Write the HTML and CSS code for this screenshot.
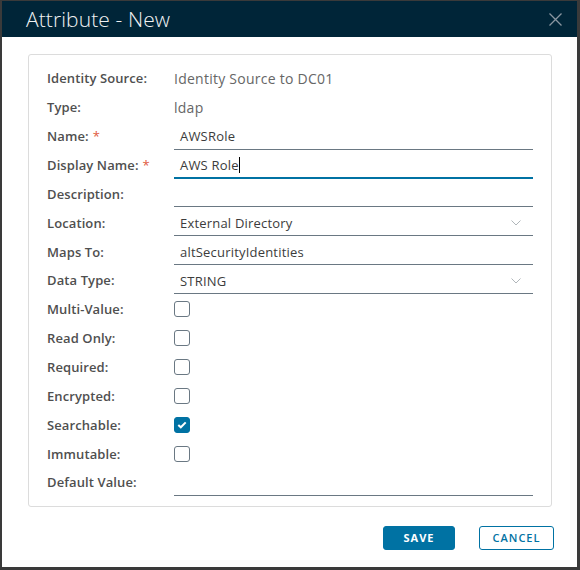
FILE: index.html
```html
<!DOCTYPE html>
<html>
<head>
<meta charset="utf-8">
<link rel="stylesheet" href="styles.css">
</head>
<body>
<div class="modal">
  <div class="modal-header">
    <h3 class="modal-title">Attribute - New</h3>
    <button class="close" aria-label="Close">
      <svg width="13" height="13" viewBox="0 0 13 13"><path d="M0.5 0.5 L12.5 12.5 M12.5 0.5 L0.5 12.5" stroke="#8a96a0" stroke-width="1.3" fill="none"/></svg>
    </button>
  </div>
  <div class="modal-body">
    <div class="card">
      <div class="form">
        <div class="label">Identity Source:</div>
        <div class="static big">Identity Source to DC01</div>

        <div class="label">Type:</div>
        <div class="static big">ldap</div>

        <div class="label">Name: <span class="req">*</span></div>
        <div class="field"><div class="input">AWSRole</div></div>

        <div class="label">Display Name: <span class="req">*</span></div>
        <div class="field"><div class="input focus">AWS Role<span class="caret"></span></div></div>

        <div class="label">Description:</div>
        <div class="field"><div class="input"></div></div>

        <div class="label">Location:</div>
        <div class="field"><div class="input select">External Directory<svg class="chev" width="10" height="6" viewBox="0 0 10 6"><path d="M0.5 0.5 L5 5 L9.5 0.5" stroke="#b0b6ba" stroke-width="1" fill="none"/></svg></div></div>

        <div class="label">Maps To:</div>
        <div class="field"><div class="input">altSecurityIdentities</div></div>

        <div class="label">Data Type:</div>
        <div class="field"><div class="input select">STRING<svg class="chev" width="10" height="6" viewBox="0 0 10 6"><path d="M0.5 0.5 L5 5 L9.5 0.5" stroke="#b0b6ba" stroke-width="1" fill="none"/></svg></div></div>

        <div class="label">Multi-Value:</div>
        <div class="field"><span class="cb"></span></div>

        <div class="label">Read Only:</div>
        <div class="field"><span class="cb"></span></div>

        <div class="label">Required:</div>
        <div class="field"><span class="cb"></span></div>

        <div class="label">Encrypted:</div>
        <div class="field"><span class="cb"></span></div>

        <div class="label">Searchable:</div>
        <div class="field"><span class="cb checked"><svg width="10" height="8" viewBox="0 0 10 8"><path d="M1.3 4 L3.8 6.3 L8.7 1.4" stroke="#fff" stroke-width="2" fill="none"/></svg></span></div>

        <div class="label">Immutable:</div>
        <div class="field"><span class="cb"></span></div>

        <div class="label">Default Value:</div>
        <div class="field"><div class="input"></div></div>
      </div>
    </div>
    <div class="footer">
      <button class="btn primary">SAVE</button>
      <button class="btn outline">CANCEL</button>
    </div>
  </div>
</div>
</body>
</html>
```
FILE: styles.css
```css
html, body {
  margin: 0;
  padding: 0;
}
body {
  background: #3a3a3a;
  width: 580px;
  height: 570px;
  padding: 1px 3px 3px 2px;
  box-sizing: border-box;
  font-family: "Open Sans", "Liberation Sans", sans-serif;
  overflow: hidden;
}
.modal {
  background: #fff;
  height: 566px;
  display: flex;
  flex-direction: column;
}
.modal-header {
  background: #002538;
  height: 36px;
  display: flex;
  align-items: center;
  justify-content: space-between;
  padding: 0 15px 0 24px;
  box-sizing: border-box;
}
.modal-title {
  margin: 0;
  color: #f0f2f3;
  font-size: 21px;
  font-weight: 300;
  letter-spacing: 0.1px;
}
.close {
  background: none;
  border: 0;
  padding: 0;
  display: flex;
  margin-top: 1px;
}
.modal-body {
  padding: 17px 25px 0 26px;
}
.card {
  border: 1px solid #dcdcdc;
  border-radius: 3px;
  padding: 9px 18px 9px 18px;
}
.form {
  display: grid;
  grid-template-columns: 127px 1fr;
  grid-auto-rows: 28.86px;
}
.label {
  display: flex;
  align-items: center;
  font-size: 13px;
  font-weight: 600;
  letter-spacing: 0.1px;
  color: #4f4f4f;
}
.req {
  color: #e0593d;
  margin-left: 4px;
  font-weight: 400;
}
.static {
  display: flex;
  align-items: center;
  color: #666;
}
.big {
  font-size: 14px;
  letter-spacing: 0.25px;
}
.field {
  display: flex;
  align-items: center;
}
.input {
  width: 100%;
  height: 28px;
  box-sizing: border-box;
  border-bottom: 1px solid #6a7883;
  padding: 2px 6px 0 6px;
  font-size: 13px;
  letter-spacing: 0.2px;
  color: #3c3c3c;
  display: flex;
  align-items: center;
  align-self: flex-start;
}
.input.focus {
  border-bottom: 2px solid #0072a3;
}
.caret {
  display: inline-block;
  width: 1px;
  height: 16px;
  background: #000;
}
.select {
  justify-content: space-between;
}
.chev {
  margin-right: 6px;
}
.cb {
  width: 16px;
  height: 16px;
  box-sizing: border-box;
  border: 1px solid #6a7883;
  border-radius: 3px;
  display: flex;
  align-items: center;
  justify-content: center;
}
.cb.checked {
  background: #0072a3;
  border-color: #0072a3;
}
.footer {
  display: flex;
  justify-content: flex-end;
  gap: 24px;
  padding: 19px 0 0 0;
  margin-right: -2px;
}
.btn {
  height: 24px;
  border-radius: 3px;
  font-family: "Open Sans", "Liberation Sans", sans-serif;
  font-size: 11px;
  letter-spacing: 1px;
  font-weight: 700;
  padding: 0;
  cursor: pointer;
}
.primary {
  width: 72px;
  background: #0072a3;
  border: 1px solid #0072a3;
  color: #fff;
}
.outline {
  width: 75px;
  background: #fff;
  border: 1px solid #0072a3;
  color: #0072a3;
  font-weight: 600;
}
```
